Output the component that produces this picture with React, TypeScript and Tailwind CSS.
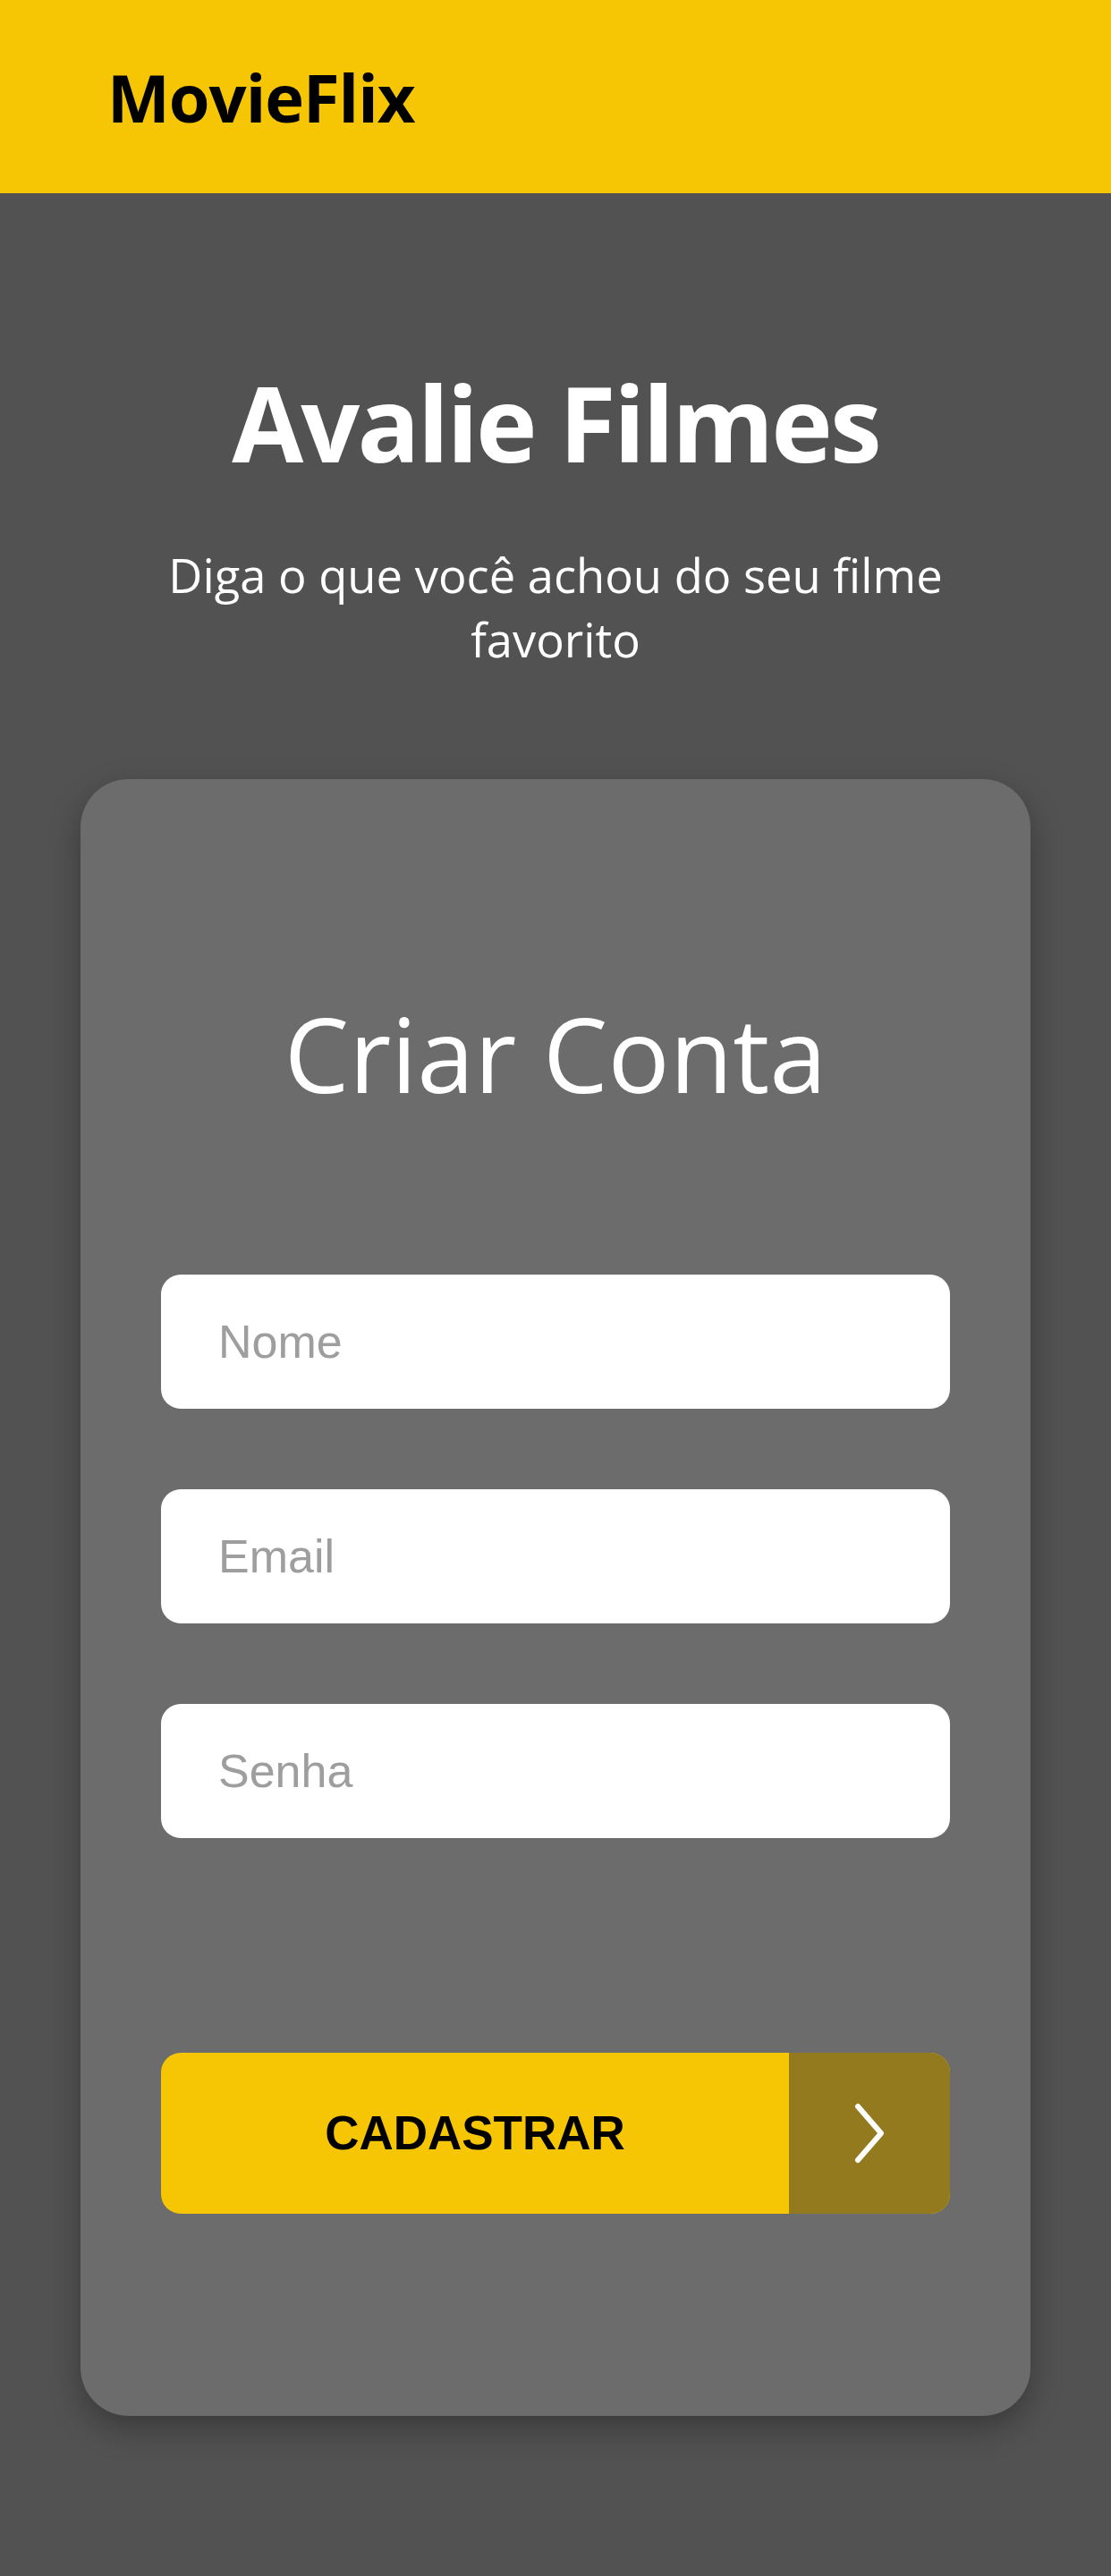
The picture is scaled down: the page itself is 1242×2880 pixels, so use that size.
const fields = ["Nome", "Email", "Senha"];

function Navbar() {
  return (
    <header className="flex h-[216px] items-center bg-[#f6c605] pl-[120px]">
      <span className="font-['Open_Sans',sans-serif] text-[74px] font-bold tracking-[-1px] text-black">
        MovieFlix
      </span>
    </header>
  );
}

function ArrowIcon() {
  return (
    <svg aria-hidden="true" className="h-[70px] w-[36px]" fill="none" viewBox="0 0 36 70">
      <polyline
        points="5,5 31,35 5,65"
        stroke="#ffffff"
        strokeLinecap="round"
        strokeLinejoin="round"
        strokeWidth="6"
      />
    </svg>
  );
}

function SignupCard() {
  return (
    <section className="mx-[90px] flex flex-col rounded-[54px] bg-[#6c6c6c] px-[90px] pb-[226px] pt-[249px] shadow-[0_14px_36px_rgba(0,0,0,0.3)]">
      <h2 className="text-center font-['Open_Sans',sans-serif] text-[115px] font-normal leading-none text-white">
        Criar Conta
      </h2>

      <form className="mt-[190px] flex flex-col gap-[90px]" onSubmit={(e) => e.preventDefault()}>
        {fields.map((field) => (
          <input
            key={field}
            className="h-[150px] w-full rounded-[22px] bg-white px-[64px] font-['Liberation_Sans',Arial,sans-serif] text-[52px] text-[#333] outline-none placeholder:text-[#9e9e9e]"
            placeholder={field}
            type={field === "Senha" ? "password" : field === "Email" ? "email" : "text"}
          />
        ))}

        <button
          className="mt-[150px] flex h-[180px] w-full cursor-pointer overflow-hidden rounded-[22px] bg-[#f6c605]"
          type="submit"
        >
          <span className="flex h-full flex-1 items-center justify-center font-['Liberation_Sans',Arial,sans-serif] text-[53px] font-bold text-black">
            CADASTRAR
          </span>
          <span className="flex h-full w-[180px] items-center justify-center bg-[#937a1e]">
            <ArrowIcon />
          </span>
        </button>
      </form>
    </section>
  );
}

export default function App() {
  return (
    <div className="min-h-[2880px] bg-[#525252]">
      <Navbar />
      <main className="flex flex-col pb-[179px]">
        <div className="flex flex-col items-center px-[140px] pt-[198px] text-center">
          <h1 className="font-['Open_Sans',sans-serif] text-[116px] font-bold leading-none tracking-[-2.8px] text-white">
            Avalie Filmes
          </h1>
          <p className="mt-[77px] font-['Open_Sans',sans-serif] text-[52.5px] leading-[72px] text-white">
            Diga o que você achou do seu filme favorito
          </p>
        </div>
        <div className="mt-[120px]">
          <SignupCard />
        </div>
      </main>
    </div>
  );
}
